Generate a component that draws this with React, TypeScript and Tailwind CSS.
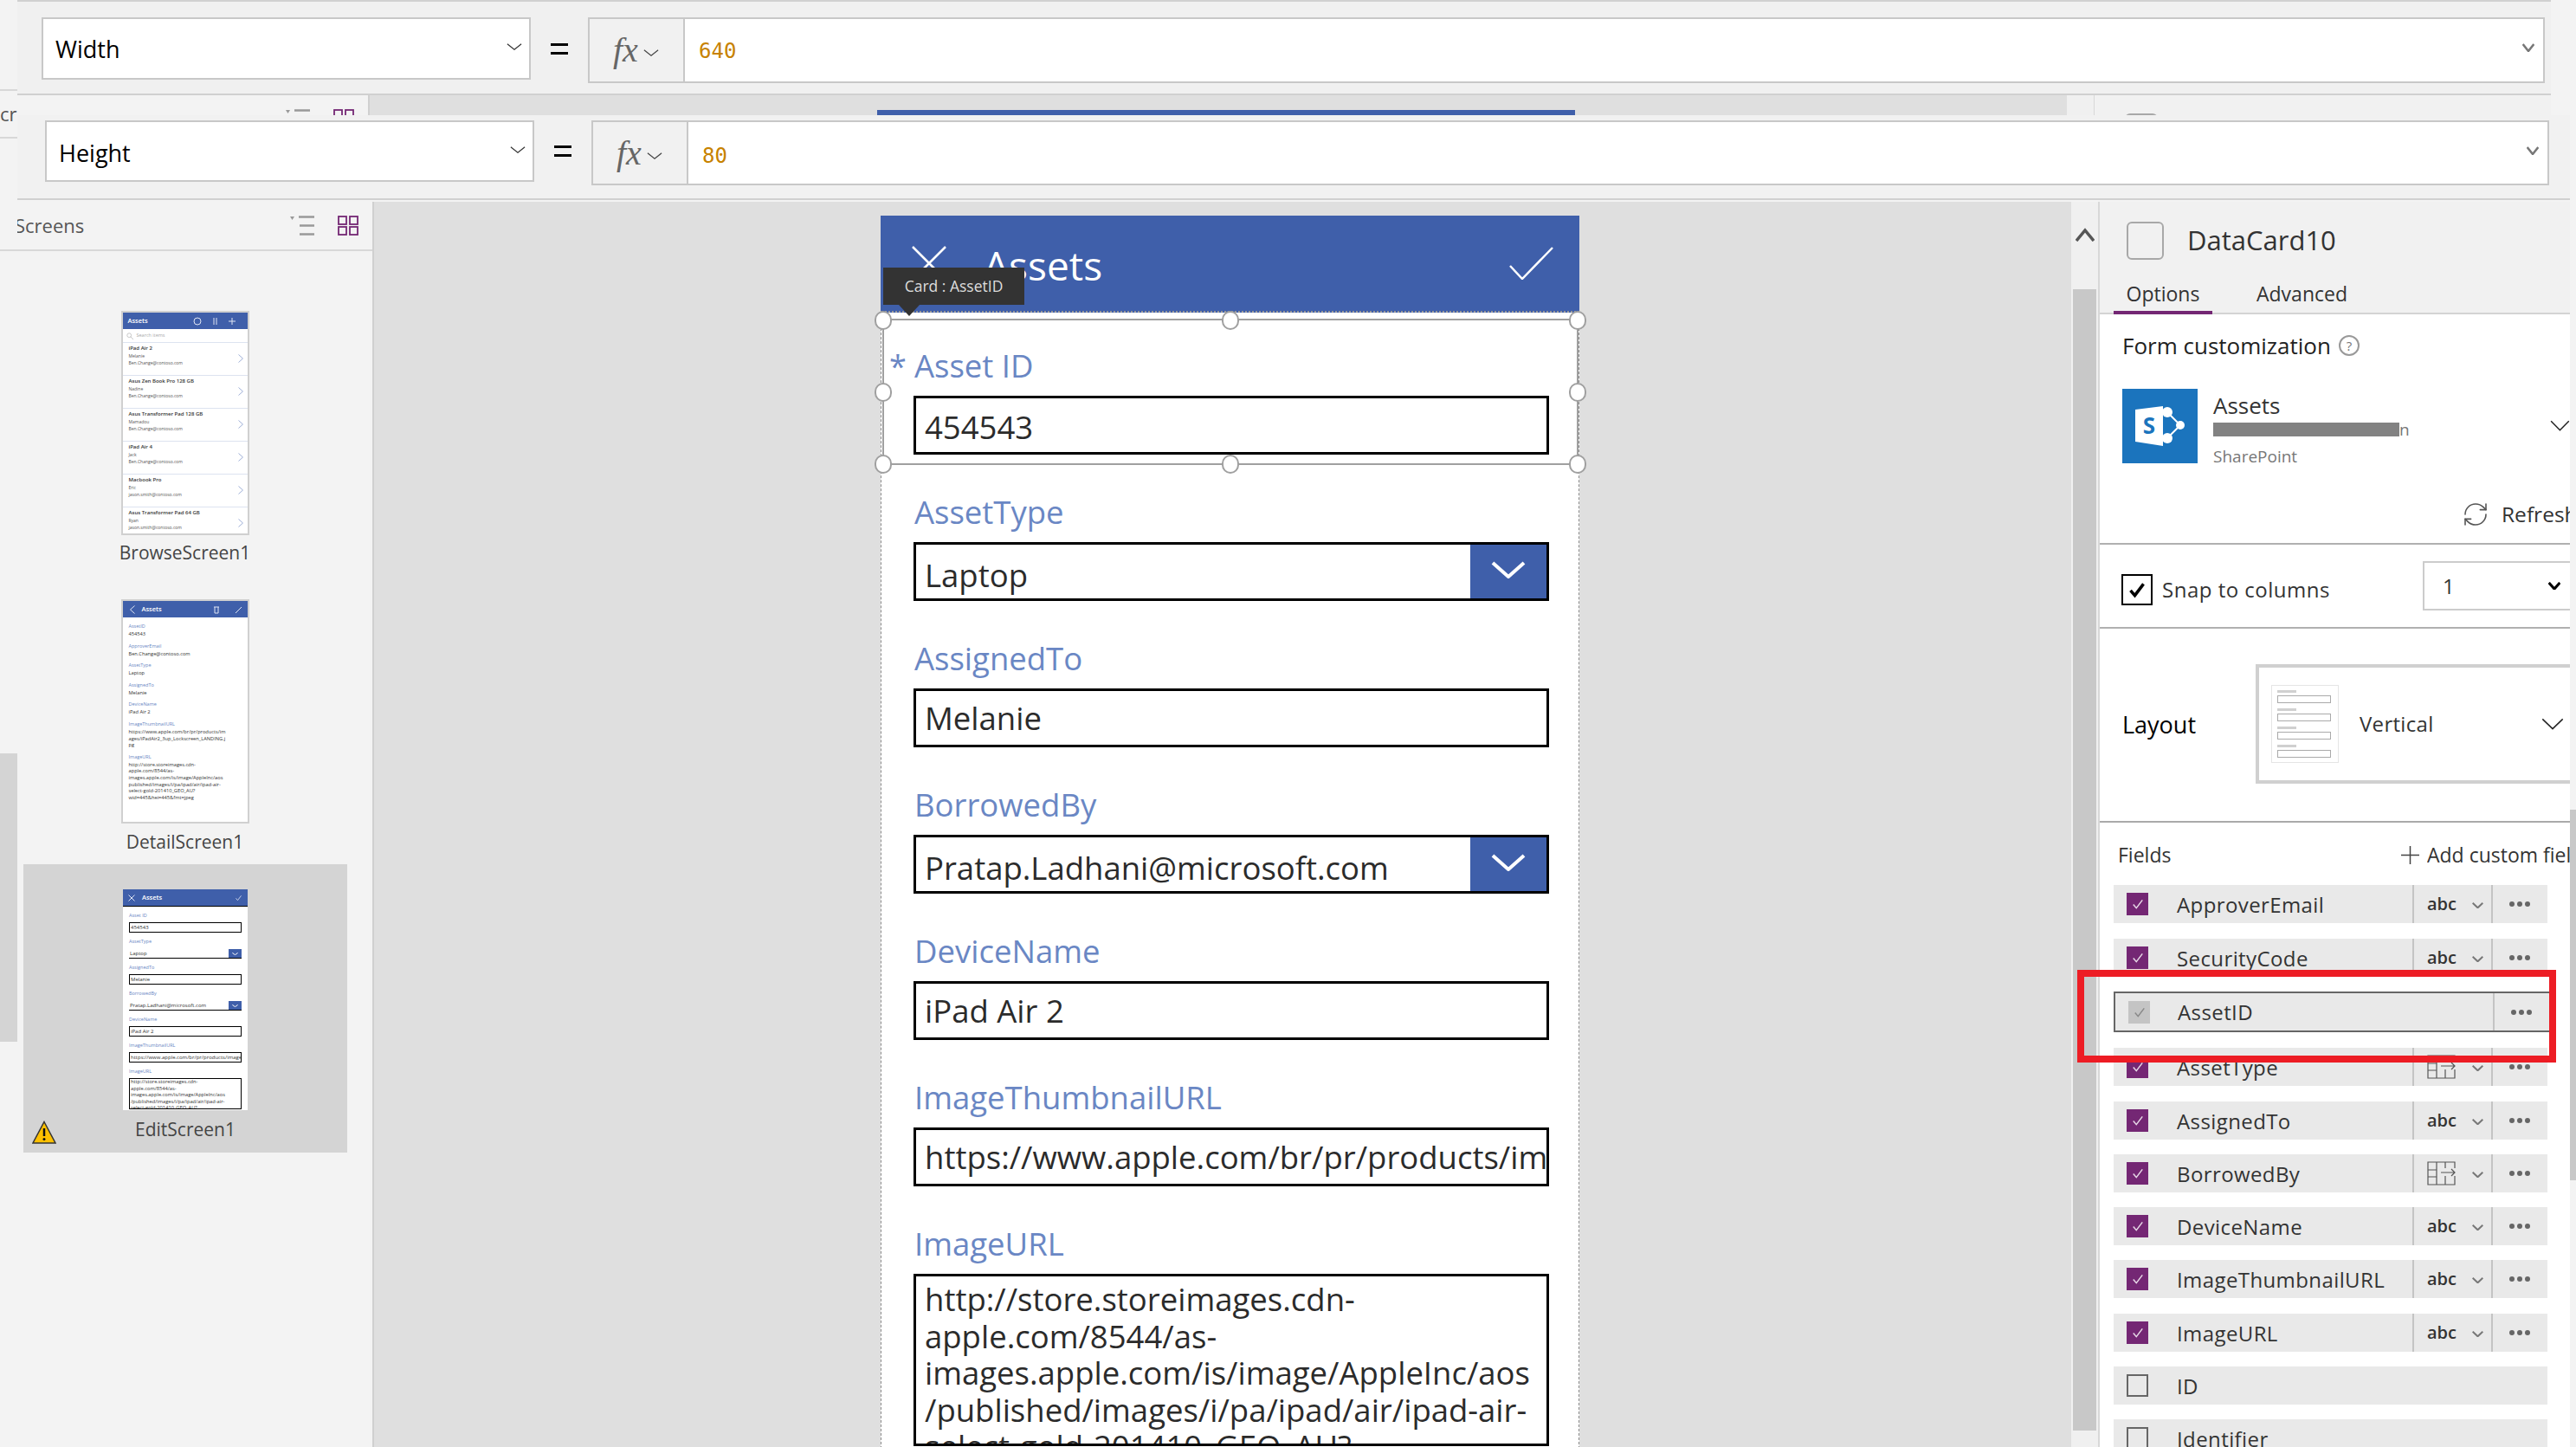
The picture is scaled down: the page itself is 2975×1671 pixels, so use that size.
import { RefreshCw } from "lucide-react";

type ChevProps = { className: string; color?: string; weight?: number };

function Chev({ className, color = "#444", weight = 1.5 }: ChevProps) {
  return (
    <svg viewBox="0 0 20 10" preserveAspectRatio="none" fill="none" className={className}>
      <path d="M1 1l9 8 9-8" stroke={color} strokeWidth={weight} vectorEffect="non-scaling-stroke" />
    </svg>
  );
}

function Check({ className, color = "#fff", weight = 1.5 }: ChevProps) {
  return (
    <svg viewBox="0 0 24 24" fill="none" className={className}>
      <path d="M3 13l6 7L21 4" stroke={color} strokeWidth={weight} vectorEffect="non-scaling-stroke" />
    </svg>
  );
}

function FormulaBar(props: { name: string; value: string; outer: string; selectH: string; inputH: string; nudge: string }) {
  return (
    <div className={props.outer}>
      <div className={`flex w-[565px] shrink-0 items-center justify-between border-2 border-[#c8c8c8] bg-white pl-[14px] pr-[8px] text-[27px] text-black ${props.selectH}`}>
        <span className={props.nudge}>{props.name}</span>
        <Chev className="mb-[4px] h-[8px] w-[18px]" color="#333" weight={1.2} />
      </div>
      <div className={`flex w-[66px] shrink-0 flex-col items-center justify-center gap-[7px] ${props.selectH}`}>
        <div className="h-[3px] w-[20px] bg-black" />
        <div className="h-[3px] w-[20px] bg-black" />
      </div>
      <div className={`flex w-[110px] shrink-0 items-center border-2 border-r-0 border-[#c8c8c8] bg-[#f1f1f1] pl-[27px] ${props.inputH}`}>
        <span className="font-['Liberation_Serif',serif] text-[40px] italic leading-none text-[#666]">fx</span>
        <Chev className="ml-[6px] mt-[6px] h-[8px] w-[18px]" color="#444" weight={1.2} />
      </div>
      <div className={`flex flex-1 items-center justify-between border-2 border-[#c8c8c8] bg-white pl-[16px] pr-[10px] ${props.inputH}`}>
        <span className={`font-['DejaVu_Sans_Mono',monospace] text-[24px] text-[#c78200] ${props.nudge}`}>{props.value}</span>
        <Chev className="mb-[6px] h-[10px] w-[14px]" color="#777" weight={2.5} />
      </div>
    </div>
  );
}

function ListIcon({ className }: { className: string }) {
  return (
    <svg viewBox="0 0 28 23" fill="none" className={className}>
      <path d="M0 1h5L2.500 5z" fill="#999" />
      <path d="M10 1.500h18M11 11.500h17M11 21.500h17" stroke="#999" strokeWidth="2.500" />
    </svg>
  );
}

function GridIcon({ className }: { className: string }) {
  return (
    <svg viewBox="0 0 24 23" fill="none" stroke="#742774" strokeWidth="1.800" className={className}>
      <rect x="1" y="1" width="9" height="9" />
      <rect x="14" y="1" width="9" height="9" />
      <rect x="1" y="13" width="9" height="9" />
      <rect x="14" y="13" width="9" height="9" />
    </svg>
  );
}

const browseItems = [
  ["iPad Air 2", "Melanie", "Ben.Change@contoso.com"],
  ["Asus Zen Book Pro 128 GB", "Nadine", "Ben.Change@contoso.com"],
  ["Asus Transformer Pad 128 GB", "Mamadou", "Ben.Change@contoso.com"],
  ["iPad Air 4", "Jack", "Ben.Change@contoso.com"],
  ["Macbook Pro", "Eric", "jason.smith@contoso.com"],
  ["Asus Transformer Pad 64 GB", "Ryan", "jason.smith@contoso.com"],
];

function BrowseThumb() {
  return (
    <div className="h-[259px] w-[148px] overflow-hidden border-2 border-[#d0d0d0] bg-white">
      <div className="flex h-[19px] items-center bg-[#3f5faa] pl-[6px] pr-[6px] text-[7.500px] font-semibold text-white">
        <span className="flex-1">Assets</span>
        <svg viewBox="0 0 60 12" fill="none" stroke="#dfe5f3" strokeWidth="1" className="h-[12px] w-[60px]">
          <circle cx="8" cy="6" r="4" />
          <path d="M27 2v8M30 2v8M44 6h8M48 2v8" />
        </svg>
      </div>
      <div className="flex h-[16px] items-center border-b border-[#dde3f0] pl-[4px] text-[5.500px] text-[#aaa]">
        <svg viewBox="0 0 10 10" fill="none" stroke="#bbb" className="mr-[4px] h-[8px] w-[8px]">
          <circle cx="4" cy="4" r="3" />
          <path d="M6 6l4 4" />
        </svg>
        Search items
      </div>
      {browseItems.map((item) => (
        <div key={item[0]} className="relative h-[38px] border-b border-[#dde3f0] pl-[7px] pt-[2px]">
          <p className="h-[9px] text-[6px] font-semibold leading-[9px] text-[#333]">{item[0]}</p>
          <p className="h-[8px] text-[5px] leading-[8px] text-[#555]">{item[1]}</p>
          <p className="h-[8px] text-[5px] leading-[8px] text-[#555]">{item[2]}</p>
          <svg viewBox="0 0 6 10" fill="none" stroke="#9fb0d8" className="absolute right-[5px] top-[13px] h-[10px] w-[6px]">
            <path d="M0.500 0.500L5.500 5 0.500 9.500" />
          </svg>
        </div>
      ))}
    </div>
  );
}

const detailItems: [string, string[]][] = [
  ["AssetID", ["454543"]],
  ["ApproverEmail", ["Ben.Change@contoso.com"]],
  ["AssetType", ["Laptop"]],
  ["AssignedTo", ["Melanie"]],
  ["DeviceName", ["iPad Air 2"]],
  ["ImageThumbnailURL", ["https://www.apple.com/br/pr/products/im", "ages/iPadAir2_3up_Lockscreen_LANDING.j", "pg"]],
  ["ImageURL", ["http://store.storeimages.cdn-", "apple.com/8544/as-", "images.apple.com/is/image/AppleInc/aos", "published/images/i/pa/ipad/air/ipad-air-", "select-gold-201410_GEO_AU?", "wid=445&hei=445&fmt=jpeg"]],
];

function DetailThumb() {
  return (
    <div className="h-[259px] w-[148px] overflow-hidden border-2 border-[#d0d0d0] bg-white">
      <div className="flex h-[19px] items-center bg-[#3f5faa] pl-[8px] pr-[6px] text-[7.500px] font-semibold text-white">
        <svg viewBox="0 0 6 10" fill="none" stroke="#dfe5f3" className="h-[10px] w-[6px]">
          <path d="M5.500 0.500L0.500 5 5.500 9.500" />
        </svg>
        <span className="ml-[8px] flex-1">Assets</span>
        <svg viewBox="0 0 34 10" fill="none" stroke="#dfe5f3" className="h-[10px] w-[34px]">
          <path d="M1 2h6M2 2v7h4V2M26 9l7-7" />
        </svg>
      </div>
      <div className="pl-[7px] pt-[5px]">
        {detailItems.map(([label, lines]) => (
          <div key={label} className="mb-[4px] w-[134px]">
            <p className="h-[10px] text-[5.500px] leading-[10px] text-[#6a87c4]">{label}</p>
            <div className="pt-[1px]">
              {lines.map((line) => (
                <p key={line} className="h-[7.600px] whitespace-nowrap text-[5.700px] leading-[7.600px] text-[#333]">{line}</p>
              ))}
            </div>
          </div>
        ))}
      </div>
    </div>
  );
}

const formFields = [
  { label: "AssetType", value: "Laptop", drop: true },
  { label: "AssignedTo", value: "Melanie" },
  { label: "BorrowedBy", value: "Pratap.Ladhani@microsoft.com", drop: true },
  { label: "DeviceName", value: "iPad Air 2" },
  { label: "ImageThumbnailURL", value: "https://www.apple.com/br/pr/products/images/iPadAir2" },
];

const imageUrlLines = [
  "http://store.storeimages.cdn-",
  "apple.com/8544/as-",
  "images.apple.com/is/image/AppleInc/aos",
  "/published/images/i/pa/ipad/air/ipad-air-",
  "select-gold-201410_GEO_AU?",
];

function MiniInput(props: { label: string; value: string; drop?: boolean }) {
  return (
    <div className="h-[30px] pl-[7px]">
      <p className="h-[15px] text-[5.500px] leading-[15px] text-[#6a87c4]">{props.label}</p>
      <div className={props.drop ? "flex h-[12px] w-[130px] items-end border-b border-black" : "flex h-[12px] w-[130px] items-center border border-black"}>
        <span className="flex-1 overflow-hidden whitespace-nowrap pl-[1px] text-[6px] text-[#333]">{props.value}</span>
        {props.drop ? (
          <span className="flex h-[10px] w-[15px] items-center justify-center bg-[#3f5faa]">
            <Chev className="h-[3px] w-[7px]" color="#fff" weight={1} />
          </span>
        ) : null}
      </div>
    </div>
  );
}

function EditThumb() {
  return (
    <div className="h-[255px] w-[144px] overflow-hidden bg-white">
      <div className="flex h-[20px] items-center border-b border-black bg-[#3f5faa] pl-[6px] pr-[6px] text-[7.500px] font-semibold text-white">
        <svg viewBox="0 0 8 8" fill="none" stroke="#dfe5f3" className="h-[8px] w-[8px]">
          <path d="M0.500 0.500l7 7M7.500 0.500l-7 7" />
        </svg>
        <span className="ml-[8px] flex-1">Assets</span>
        <Check className="h-[8px] w-[9px]" color="#dfe5f3" weight={0.8} />
      </div>
      <div className="pt-[3px]">
        <MiniInput label="Asset ID" value="454543" />
        {formFields.map((f) => (
          <MiniInput key={f.label} label={f.label} value={f.value} drop={f.drop} />
        ))}
        <div className="h-[40px] pl-[7px]">
          <p className="h-[15px] text-[5.500px] leading-[15px] text-[#6a87c4]">ImageURL</p>
          <div className="h-[36px] w-[130px] overflow-hidden border border-black pl-[1px] text-[5.700px] leading-[7.600px] text-[#333]">
            {imageUrlLines.map((line) => (
              <p key={line} className="whitespace-nowrap">{line}</p>
            ))}
          </div>
        </div>
      </div>
    </div>
  );
}

function LeftPanel() {
  return (
    <div className="flex w-[432px] shrink-0 flex-col border-r-2 border-[#d0d0d0] bg-[#f3f3f3]">
      <div className="flex h-[57px] shrink-0 items-center border-b-2 border-[#d8d8d8] pl-[20px] pr-[16px]">
        <div className="flex-1 overflow-hidden">
          <span className="-ml-[3px] block text-[22px] text-[#555]">Screens</span>
        </div>
        <ListIcon className="mr-[27px] h-[23px] w-[28px]" />
        <GridIcon className="h-[23px] w-[24px]" />
      </div>
      <div className="flex flex-1">
        <div className="w-[20px] shrink-0 pt-[580px]">
          <div className="h-[333px] bg-[#d4d4d4]" />
        </div>
        <div className="w-[410px] pt-[69px]">
          <div className="flex flex-col items-center pr-[23px]">
            <BrowseThumb />
            <p className="mt-[6px] text-[21px] leading-[28px] text-[#444]">BrowseScreen1</p>
          </div>
          <div className="mt-[40px] flex flex-col items-center pr-[23px]">
            <DetailThumb />
            <p className="mt-[7px] text-[21px] leading-[28px] text-[#444]">DetailScreen1</p>
          </div>
          <div className="relative ml-[7px] mt-[12px] flex h-[333px] w-[374px] flex-col items-center bg-[#d4d4d4] pt-[29px]">
            <EditThumb />
            <p className="mt-[8px] text-[21px] leading-[28px] text-[#444]">EditScreen1</p>
            <svg viewBox="0 0 28 27" className="absolute left-[10px] top-[296px] h-[27px] w-[28px]">
              <path d="M14 1.500L27 26H1z" fill="#ffc000" stroke="#333" strokeWidth="1.500" />
              <path d="M14 9v9" stroke="#111" strokeWidth="2.500" />
              <circle cx="14" cy="21.500" r="1.500" fill="#111" />
            </svg>
          </div>
        </div>
      </div>
    </div>
  );
}

function FieldCard(props: { label: string; value: string; drop?: boolean; nudge?: string }) {
  return (
    <div className="h-[169px] pt-[29px]">
      <p className="ml-[38px] h-[48px] text-[36.500px] leading-[48px] text-[#6a87c4]">{props.label}</p>
      <div className="ml-[37px] mt-[11px] flex h-[68px] w-[734px] border-[3px] border-black bg-white">
        <div className={`flex-1 overflow-hidden whitespace-nowrap pl-[10px] pr-[7px] text-[36.500px] leading-[62px] text-[#2b2b2b] ${props.nudge ?? ""}`}>{props.value}</div>
        {props.drop ? (
          <div className="flex w-[88px] shrink-0 items-center justify-center bg-[#3f5faa]">
            <Chev className="mb-[4px] h-[20px] w-[40px]" color="#fff" weight={4} />
          </div>
        ) : null}
      </div>
    </div>
  );
}

function Handle({ className }: { className: string }) {
  return <div className={`absolute h-[22px] w-[20px] rounded-full border-2 border-[#a0a0a0] bg-white ${className}`} />;
}

function FormCanvas() {
  return (
    <div className="w-[1960px] shrink-0 overflow-hidden bg-[#dfdfdf] pl-[585px] pt-[16px]">
      <div className="relative w-[807px] border-x border-dashed border-[#8c8c8c] bg-white">
        <div className="-mx-px flex h-[112px] items-center border-b-2 border-dotted border-[#999] bg-[#3f5faa] pl-[36px] pr-[30px] text-white">
          <svg viewBox="0 0 40 40" fill="none" stroke="#fff" strokeWidth="2.500" className="h-[40px] w-[40px]">
            <path d="M1 1l38 38M39 1L1 39" />
          </svg>
          <span className="ml-[43px] mt-[3px] flex-1 text-[46px] leading-none">Assets</span>
          <svg viewBox="0 0 51 38" fill="none" stroke="#fff" strokeWidth="2.500" className="h-[38px] w-[51px]">
            <path d="M1 22l14 15L50 1" />
          </svg>
        </div>
        <div className="pt-[8px]">
          <FieldCard label="Asset ID" value="454543" nudge="pt-[2px]" />
          {formFields.map((f) => (
            <FieldCard key={f.label} label={f.label} value={f.value} drop={f.drop} nudge={f.drop ? "pt-[4px]" : ""} />
          ))}
          <div className="h-[340px] pt-[29px]">
            <p className="ml-[38px] h-[48px] text-[36.500px] leading-[48px] text-[#6a87c4]">ImageURL</p>
            <div className="ml-[37px] mt-[11px] h-[199px] w-[734px] overflow-hidden border-[3px] border-black pl-[10px] pt-[5px] text-[36.500px] leading-[42.500px] text-[#2b2b2b]">
              {imageUrlLines.map((line) => (
                <p key={line} className="whitespace-nowrap">{line}</p>
              ))}
            </div>
          </div>
        </div>

        <span className="absolute left-[9px] top-[150px] text-[36px] leading-[48px] text-[#6a87c4]">*</span>

        {/* selection box around the AssetID card */}
        <div className="absolute left-[1px] top-[119px] h-[169px] w-[804px] border-2 border-[#a0a0a0]">
          <Handle className="-left-[11px] -top-[11px]" />
          <Handle className="left-[390px] -top-[11px]" />
          <Handle className="-right-[11px] -top-[11px]" />
          <Handle className="-left-[11px] top-[72px]" />
          <Handle className="-right-[11px] top-[72px]" />
          <Handle className="-left-[11px] top-[155px]" />
          <Handle className="left-[390px] top-[155px]" />
          <Handle className="-right-[11px] top-[155px]" />
        </div>

        <div className="absolute left-[2px] top-[60px] flex h-[43px] w-[163px] items-center justify-center bg-[#333] text-[17.500px] text-[#ddd]">
          Card : AssetID
          <div className="absolute left-[18px] top-[43px] h-0 w-0 border-x-[12px] border-t-[13px] border-x-transparent border-t-[#333]" />
        </div>
      </div>
    </div>
  );
}

function SharePointLogo() {
  return (
    <svg viewBox="0 0 87 86" className="h-[86px] w-[87px] shrink-0">
      <rect width="87" height="86" fill="#1b74bd" />
      <path d="M52 27L67 42 52 57" fill="none" stroke="#fff" strokeWidth="2" />
      <circle cx="52" cy="27" r="6" fill="#fff" />
      <circle cx="67" cy="42" r="5" fill="#fff" />
      <circle cx="52" cy="57" r="6" fill="#fff" />
      <path d="M15 24L47 20V66L15 61z" fill="#fff" />
      <text x="31" y="52" textAnchor="middle" fill="#1b74bd" fontSize="26" fontWeight="700" fontFamily="Open Sans, sans-serif">S</text>
    </svg>
  );
}

function TableIcon({ className }: { className: string }) {
  return (
    <svg viewBox="0 0 33 28" fill="none" stroke="#555" strokeWidth="1.200" className={className}>
      <path d="M32 8V1H1v26h31V17M11 1v26M1 10h10M1 18h10M21 1v7M21 17v10M16 13h16M28 9l4 4-4 4" />
    </svg>
  );
}

const fieldRows = [
  { name: "ApproverEmail", type: "abc", gap: "" },
  { name: "SecurityCode", type: "abc", gap: "mt-[18px]" },
  { name: "AssetID", type: "drag", gap: "mt-[17px]" },
  { name: "AssetType", type: "table", gap: "mt-[18px]" },
  { name: "AssignedTo", type: "abc", gap: "mt-[18px]" },
  { name: "BorrowedBy", type: "table", gap: "mt-[17px]" },
  { name: "DeviceName", type: "abc", gap: "mt-[17px]" },
  { name: "ImageThumbnailURL", type: "abc", gap: "mt-[17px]" },
  { name: "ImageURL", type: "abc", gap: "mt-[18px]" },
  { name: "ID", type: "none", gap: "mt-[17px]" },
  { name: "Identifier", type: "none", gap: "mt-[17px]" },
];

function Dots() {
  return <span className="flex gap-[3px]">{[0, 1, 2].map((i) => <span key={i} className="h-[6px] w-[6px] rounded-full bg-[#666]" />)}</span>;
}

function FieldRow({ name, type, gap }: { name: string; type: string; gap: string }) {
  if (type === "drag") {
    return (
      <div className={`relative flex h-[47px] w-[510px] items-center border-2 border-[#666] bg-[#e9e9e9] ${gap}`}>
        <span className="ml-[15px] flex h-[26px] w-[25px] items-center justify-center bg-[#c4c4c4]">
          <Check className="h-[14px] w-[16px]" color="#888" />
        </span>
        <span className="ml-[32px] mt-[1px] w-[364px] text-[24px] tracking-[0.4px] text-[#333]">{name}</span>
        <span className="h-full w-[2px] bg-[#c4c4c4]" />
        <span className="ml-[19px]"><Dots /></span>
        {/* red callout from the docs screenshot */}
        <div className="absolute -left-[44px] -top-[27px] h-[107px] w-[553px] border-[8px] border-[#ed1c24]" />
      </div>
    );
  }
  const on = type !== "none";
  return (
    <div className={`flex h-[44px] w-[501px] items-center bg-[#e9e9e9] ${gap}`}>
      {on ? (
        <span className="ml-[15px] flex h-[26px] w-[25px] shrink-0 items-center justify-center bg-[#742774]">
          <Check className="h-[14px] w-[16px]" color="#e7d9e7" />
        </span>
      ) : (
        <span className="ml-[15px] h-[26px] w-[25px] shrink-0 border-2 border-[#666]" />
      )}
      <span className="ml-[33px] mt-[1px] w-[272px] shrink-0 whitespace-nowrap text-[24px] tracking-[0.4px] text-[#333]">{name}</span>
      {on ? (
        <>
          <span className="h-full w-[2px] shrink-0 bg-[#c4c4c4]" />
          <span className="flex w-[89px] shrink-0 items-center pl-[15px]">
            {type === "abc" ? (
              <span className="w-[52px] text-[20px] font-semibold leading-none text-[#333]">abc</span>
            ) : (
              <span className="flex w-[52px]"><TableIcon className="h-[28px] w-[33px]" /></span>
            )}
            <Chev className="mt-[3px] h-[7px] w-[13px]" color="#777" weight={2} />
          </span>
          <span className="h-full w-[2px] shrink-0 bg-[#c4c4c4]" />
          <span className="ml-[19px]"><Dots /></span>
        </>
      ) : null}
    </div>
  );
}

function FormThumbLine({ last }: { last?: boolean }) {
  return (
    <div className={last ? "" : "mb-[6px]"}>
      <div className="ml-[6px] h-[3px] w-[22px] bg-[#d0d0d0]" />
      <div className="ml-[6px] mt-[3px] h-[9px] w-[62px] border border-[#aaa]" />
    </div>
  );
}

function RightPanel() {
  return (
    <div className="flex w-[545px] shrink-0 flex-col border-l-2 border-[#d8d8d8] bg-white">
      <div className="h-[130px] shrink-0 border-b-2 border-[#d4d4d4] bg-[#f1f1f1]">
        <div className="flex h-[89px] items-center pl-[31px]">
          <span className="h-[44px] w-[43px] rounded-[6px] border-2 border-[#a8a8a8]" />
          <span className="ml-[27px] text-[31px] text-[#333]">DataCard10</span>
        </div>
        <div className="flex h-[41px] pl-[16px] text-[23px] text-[#333]">
          <span className="flex h-[41px] w-[114px] justify-center border-b-4 border-[#742774] leading-[34px]">Options</span>
          <span className="ml-[51px] leading-[34px]">Advanced</span>
        </div>
      </div>

      <div className="relative h-[266px] shrink-0 overflow-hidden border-b-2 border-[#b0b0b0] pl-[26px] pt-[20px]">
        <div className="flex h-[32px] items-center text-[26px] leading-none text-[#222]">
          Form customization
          <span className="ml-[9px] flex h-[24px] w-[24px] items-center justify-center rounded-full border-2 border-[#999] text-[15px] text-[#777]">?</span>
        </div>
        <div className="mt-[34px] flex">
          <SharePointLogo />
          <div className="ml-[18px] w-[300px]">
            <p className="h-[30px] pt-[2px] text-[26px] leading-[34px] text-[#333]">Assets</p>
            <div className="mt-[9px] flex h-[16px] items-end text-[19px] leading-[16px] text-[#777]">
              <div className="h-[16px] w-[215px] shrink-0 bg-[#828282]" />
              <span>n</span>
            </div>
            <p className="mt-[9px] text-[19px] leading-[28px] text-[#777]">SharePoint</p>
          </div>
          <Chev className="ml-[90px] mt-[36px] h-[13px] w-[23px]" color="#222" />
        </div>
        <div className="absolute left-[418px] top-[213px] flex w-[200px] items-center">
          <RefreshCw className="h-[32px] w-[32px] text-[#555]" strokeWidth={1.2} />
          <span className="ml-[14px] text-[24.500px] text-[#333]">Refresh</span>
        </div>
      </div>

      <div className="flex h-[97px] shrink-0 items-center overflow-hidden border-b-2 border-[#b0b0b0] pl-[25px] pt-[8px]">
        <span className="flex h-[36px] w-[36px] shrink-0 items-center justify-center border-2 border-black">
          <Check className="h-[20px] w-[20px]" color="#000" weight={3.5} />
        </span>
        <span className="ml-[11px] w-[301px] shrink-0 text-[24px] tracking-[0.5px] text-[#333]">Snap to columns</span>
        <div className="-mt-[8px] flex h-[57px] w-[200px] shrink-0 items-center border-2 border-[#ccc] pl-[21px]">
          <span className="w-[122px] text-[24px] text-[#333]">1</span>
          <Chev className="h-[9px] w-[14px]" color="#000" weight={3} />
        </div>
      </div>

      <div className="flex h-[224px] shrink-0 items-start overflow-hidden border-b-2 border-[#aaa] pl-[26px] pt-[41px]">
        <span className="mt-[50px] w-[154px] shrink-0 text-[27px] leading-[40px] text-black">Layout</span>
        <div className="flex h-[138px] w-[400px] shrink-0 items-center border-4 border-[#d0d0d0] pl-[14px]">
          <div className="h-[90px] w-[78px] shrink-0 border border-[#e5e5e5] pt-[5px]">
            <FormThumbLine />
            <FormThumbLine />
            <FormThumbLine />
            <FormThumbLine last />
          </div>
          <span className="ml-[24px] w-[210px] shrink-0 text-[24px] tracking-[0.3px] text-[#333]">Vertical</span>
          <Chev className="h-[14px] w-[26px]" color="#222" />
        </div>
      </div>

      <div className="pl-[16px] pt-[22px]">
        <div className="mb-[20px] flex h-[30px] items-center text-[23px] text-[#333]">
          <span className="ml-[5px] w-[327px]">Fields</span>
          <svg viewBox="0 0 21 21" fill="none" stroke="#444" strokeWidth="1.500" className="h-[21px] w-[21px] shrink-0">
            <path d="M10.500 0v21M0 10.500h21" />
          </svg>
          <div className="ml-[9px] w-[165px] overflow-hidden whitespace-nowrap">Add custom field</div>
        </div>
        {fieldRows.map((r) => (
          <FieldRow key={r.name} {...r} />
        ))}
      </div>
    </div>
  );
}

export default function App() {
  return (
    <div className="flex h-[1671px] w-[2975px] flex-col overflow-hidden bg-[#f3f3f3] font-['Open_Sans',sans-serif]">
      <div className="flex h-[233px] shrink-0">
        <div className="w-[20px] shrink-0 pt-[103px]">
          <div className="h-[57px] overflow-hidden border-y-2 border-[#d8d8d8] text-[22px] leading-[53px] text-[#555]">cre</div>
        </div>
        <div className="flex-1">
          <div className="w-[2926px] border-t-2 border-[#d0d0d0]">
            <FormulaBar
              name="Width"
              value="640"
              outer="flex h-[108px] items-start border-b-2 border-[#d0d0d0] bg-[#f0f0f0] pl-[28px] pr-[7px] pt-[18px]"
              selectH="h-[72px]"
              inputH="h-[76px]"
              nudge="pt-[2px]"
            />
            <div className="flex h-[23px]">
              <div className="flex w-[407px] shrink-0 items-start justify-end overflow-hidden border-r-2 border-[#d0d0d0] bg-[#f3f3f3] pr-[16px] pt-[16px]">
                <ListIcon className="mr-[27px] h-[23px] w-[28px] shrink-0" />
                <GridIcon className="h-[23px] w-[24px] shrink-0" />
              </div>
              <div className="flex w-[1960px] shrink-0 items-end bg-[#dfdfdf] pl-[586px]">
                <div className="h-[6px] w-[806px] bg-[#3f5faa]" />
              </div>
              <div className="w-[31px] shrink-0 bg-[#f0f0f0]" />
              <div className="flex-1 overflow-hidden border-l border-[#d8d8d8] bg-[#f1f1f1] pl-[35px] pt-[21px]">
                <div className="h-[10px] w-[38px] rounded-t-[6px] border-2 border-[#a8a8a8]" />
              </div>
            </div>
          </div>
          <FormulaBar
            name="Height"
            value="80"
            outer="flex h-[98px] w-[2948px] items-start border-b-2 border-[#d0d0d0] bg-[#f1f1f1] pl-[32px] pr-[24px] pt-[6px]"
            selectH="h-[71px]"
            inputH="h-[75px]"
            nudge="pt-[6px]"
          />
        </div>
      </div>

      <div className="flex flex-1 overflow-hidden">
        <LeftPanel />
        <FormCanvas />
        <div className="flex w-[31px] shrink-0 flex-col bg-[#f0f0f0] pl-[2px]">
          <svg viewBox="0 0 22 16" fill="none" stroke="#555" strokeWidth="3.500" className="ml-[3px] mt-[30px] h-[16px] w-[22px]">
            <path d="M1 15L11 3l10 12" />
          </svg>
          <div className="mt-[55px] h-[1318px] w-[27px] bg-[#c8c8c8]" />
        </div>
        <RightPanel />
        <div className="w-[7px] shrink-0 pt-[702px]">
          <div className="h-[428px] bg-[#c8c8c8]" />
        </div>
      </div>
    </div>
  );
}
